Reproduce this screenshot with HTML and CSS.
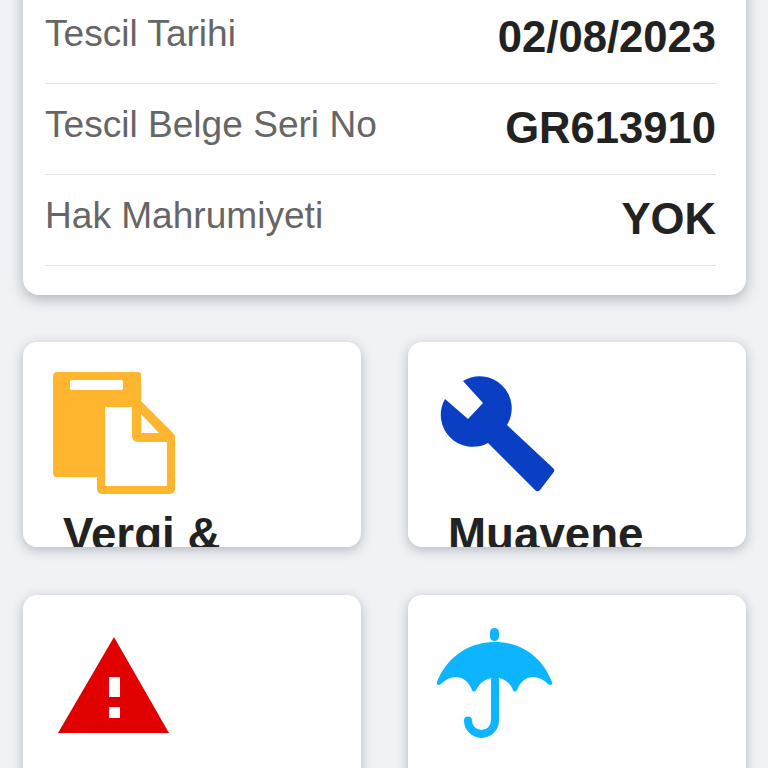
FILE: index.html
```html
<!DOCTYPE html>
<html lang="tr">
<head>
    <meta charset="UTF-8">
    <meta name="viewport" content="width=device-width, initial-scale=1.0">
    <title>Araç Detayı</title>
    <link rel="stylesheet" href="styles.css">
</head>
<body>
    <div class="info-card">
        <div class="info-row">
            <span class="info-label">Tescil Tarihi</span>
            <span class="info-value">02/08/2023</span>
        </div>
        <div class="info-row">
            <span class="info-label">Tescil Belge Seri No</span>
            <span class="info-value">GR613910</span>
        </div>
        <div class="info-row">
            <span class="info-label">Hak Mahrumiyeti</span>
            <span class="info-value">YOK</span>
        </div>
    </div>
    <div class="tiles">
        <div class="tile">
            <svg class="tile-icon" viewBox="0 0 130 130">
                <path fill="#ffb62e" d="M3 0H85a3 3 0 0 1 3 3V29L120 61a6 6 0 0 1 2 4V117a5 5 0 0 1-5 5H49a5 5 0 0 1-5-5V105H3a4 4 0 0 1-3-4V3a4 4 0 0 1 3-3Z"/>
                <rect fill="#fff" x="17" y="8" width="53" height="10" rx="2"/>
                <path fill="#fff" d="M52 35H79V63a6 6 0 0 0 6 7H114V114H52Z"/>
                <path fill="#fff" d="M88 42L106 61H88Z"/>
            </svg>
            <div class="tile-title">Vergi &amp;</div>
        </div>
        <div class="tile">
            <svg class="tile-icon" viewBox="0 0 130 130">
                <path fill="#0a3fc4" d="M25 9A32 32 0 0 1 69 53L115 96a3.500 3.500 0 0 1 0 5L102 118a3.500 3.500 0 0 1-5 0L50 71A32 32 0 0 1 7 27L30 47L45 31Z"/>
            </svg>
            <div class="tile-title">Muavene</div>
        </div>
        <div class="tile">
            <svg class="tile-icon" viewBox="0 0 130 130">
                <path fill="#e00000" d="M61 12L116 108H5Z"/>
                <rect fill="#fff" x="56" y="52" width="11" height="20"/>
                <rect fill="#fff" x="56" y="82" width="11" height="11"/>
            </svg>
            <div class="tile-title">Ceza</div>
        </div>
        <div class="tile">
            <svg class="tile-icon" viewBox="0 0 130 130">
                <rect fill="#0db4ff" x="52" y="3" width="9" height="13" rx="4.500"/>
                <path fill="#0db4ff" d="M57 17C27 17 7 36 -1 57C-2 60 1 61 3 59C14 48 28 50 34 65C35 67 37 67 38 65C43 56 49 53 57 53C65 53 71 56 75 65C76 67 78 67 79 65C85 50 99 48 110 59C112 61 115 60 114 57C106 36 87 17 57 17Z"/>
                <path fill="none" stroke="#0db4ff" stroke-width="8" stroke-linecap="round" d="M57 55V95.500A13.500 13.500 0 0 1 30 95.500"/>
            </svg>
            <div class="tile-title">Sigorta</div>
        </div>
    </div>
</body>
</html>
```
FILE: styles.css
```css
html, body {
    height: 768px;
    overflow: hidden;
}

body {
    margin: 0;
    background-color: #f0f2f5;
    font-family: "Liberation Sans", Arial, sans-serif;
    color: #222;
}

.info-card {
    margin: -100px 22px 0 23px;
    padding: 0 30px 29px 22px;
    background-color: #fff;
    border-radius: 16px;
    box-shadow: 0 4px 14px rgba(50, 60, 80, 0.35);
}

.info-row {
    display: flex;
    justify-content: space-between;
    align-items: flex-end;
    height: 90px;
    border-bottom: 1px solid #e1e3e6;
}

.info-row:first-child {
    height: 183px;
}

.info-label {
    padding-bottom: 28px;
    font-size: 37.100px;
    color: #666;
}

.info-value {
    padding-bottom: 21px;
    font-size: 43.600px;
    font-weight: bold;
}

.tiles {
    display: grid;
    grid-template-columns: 338px 338px;
    column-gap: 47px;
    row-gap: 48px;
    margin: 47px 0 0 23px;
}

.tile {
    height: 205px;
    overflow: hidden;
    padding: 30px 0 0 30px;
    box-sizing: border-box;
    background-color: #fff;
    border-radius: 14px;
    box-shadow: 0 3px 12px rgba(50, 60, 80, 0.32);
}

.tile-icon {
    display: block;
    width: 130px;
    height: 130px;
    overflow: visible;
}

.tile-title {
    margin: 7px 0 0 10px;
    font-size: 45.700px;
    font-weight: bold;
}
```
